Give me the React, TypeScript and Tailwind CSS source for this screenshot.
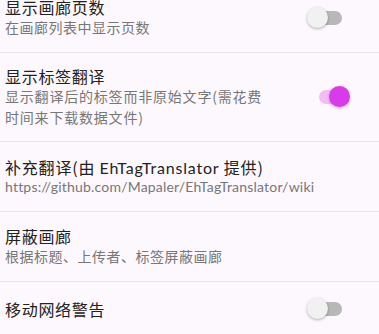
import React from "react";

const cjk = { fontFamily: '"Noto Sans CJK SC", "Noto Sans", sans-serif' };
const latin = { fontFamily: 'Lato, "Noto Sans CJK SC", sans-serif' };

function Toggle({ on }: { on: boolean }) {
  if (on) {
    return (
      <div className="relative w-[36px] h-[22px] shrink-0">
        <div className="absolute left-[4px] top-[4px] w-[30px] h-[14px] rounded-full bg-[#f3bdf3]" />
        <div className="absolute left-[14px] top-[0px] w-[21px] h-[21px] rounded-full bg-[#d83be8] shadow-[0_1px_3px_rgba(150,0,160,0.35)]" />
      </div>
    );
  }
  return (
    <div className="relative w-[36px] h-[22px] shrink-0">
      <div className="absolute left-[1px] top-[4px] w-[34px] h-[14px] rounded-full bg-[#b8b8b8]" />
      <div className="absolute left-[0px] top-[0px] w-[21px] h-[21px] rounded-full bg-[#f1f1f1] shadow-[0_1px_3px_rgba(0,0,0,0.3)]" />
    </div>
  );
}

function Divider() {
  return <div className="h-px bg-[#ebe3eb]" />;
}

export default function App() {
  return (
    <div className="w-[379px] h-[334px] overflow-hidden bg-[#fdf8fd]">
      <div className="-mt-[20px]">
        {/* Row 1 */}
        <div className="h-[72px] flex items-center pl-[5px] pr-[36px] pt-[3px]">
          <div className="flex-1 flex flex-col">
            <div style={cjk} className="text-[16px] leading-[20px] tracking-[0.7px] text-[#222]">显示画廊页数</div>
            <div style={cjk} className="text-[14px] leading-[21px] tracking-[0.5px] text-[#777]">在画廊列表中显示页数</div>
          </div>
          <Toggle on={false} />
        </div>
        <Divider />
        {/* Row 2 */}
        <div className="h-[88px] flex items-center pl-[5px] pr-[28px]">
          <div className="flex-1 flex flex-col">
            <div style={cjk} className="text-[16px] leading-[20px] tracking-[0.7px] text-[#222]">显示标签翻译</div>
            <div style={cjk} className="text-[14px] leading-[21px] tracking-[0.8px] text-[#777]">
              显示翻译后的标签而非原始文字(需花费
              <br />
              时间来下载数据文件)
            </div>
          </div>
          <Toggle on={true} />
        </div>
        <Divider />
        {/* Row 3 */}
        <div className="h-[69px] flex flex-col justify-center pl-[5px]">
          <div style={cjk} className="text-[16px] leading-[20px] tracking-[0.8px] text-[#222]">
            补充翻译(由 <span style={latin}>EhTagTranslator</span> 提供)
          </div>
          <div style={latin} className="text-[14px] leading-[18px] tracking-[0.2px] text-[#777]">
            https://github.com/Mapaler/EhTagTranslator/wiki
          </div>
        </div>
        <Divider />
        {/* Row 4 */}
        <div className="h-[69px] flex flex-col justify-center pl-[5px]">
          <div style={cjk} className="text-[16px] leading-[20px] tracking-[0.7px] text-[#222]">屏蔽画廊</div>
          <div style={cjk} className="text-[14px] leading-[21px] tracking-[0.5px] text-[#777]">根据标题、上传者、标签屏蔽画廊</div>
        </div>
        <Divider />
        {/* Row 5 */}
        <div className="h-[54px] flex items-center pl-[5px] pr-[36px]">
          <div className="flex-1">
            <div style={cjk} className="text-[16px] leading-[20px] tracking-[0.7px] text-[#222]">移动网络警告</div>
          </div>
          <Toggle on={false} />
        </div>
      </div>
    </div>
  );
}
